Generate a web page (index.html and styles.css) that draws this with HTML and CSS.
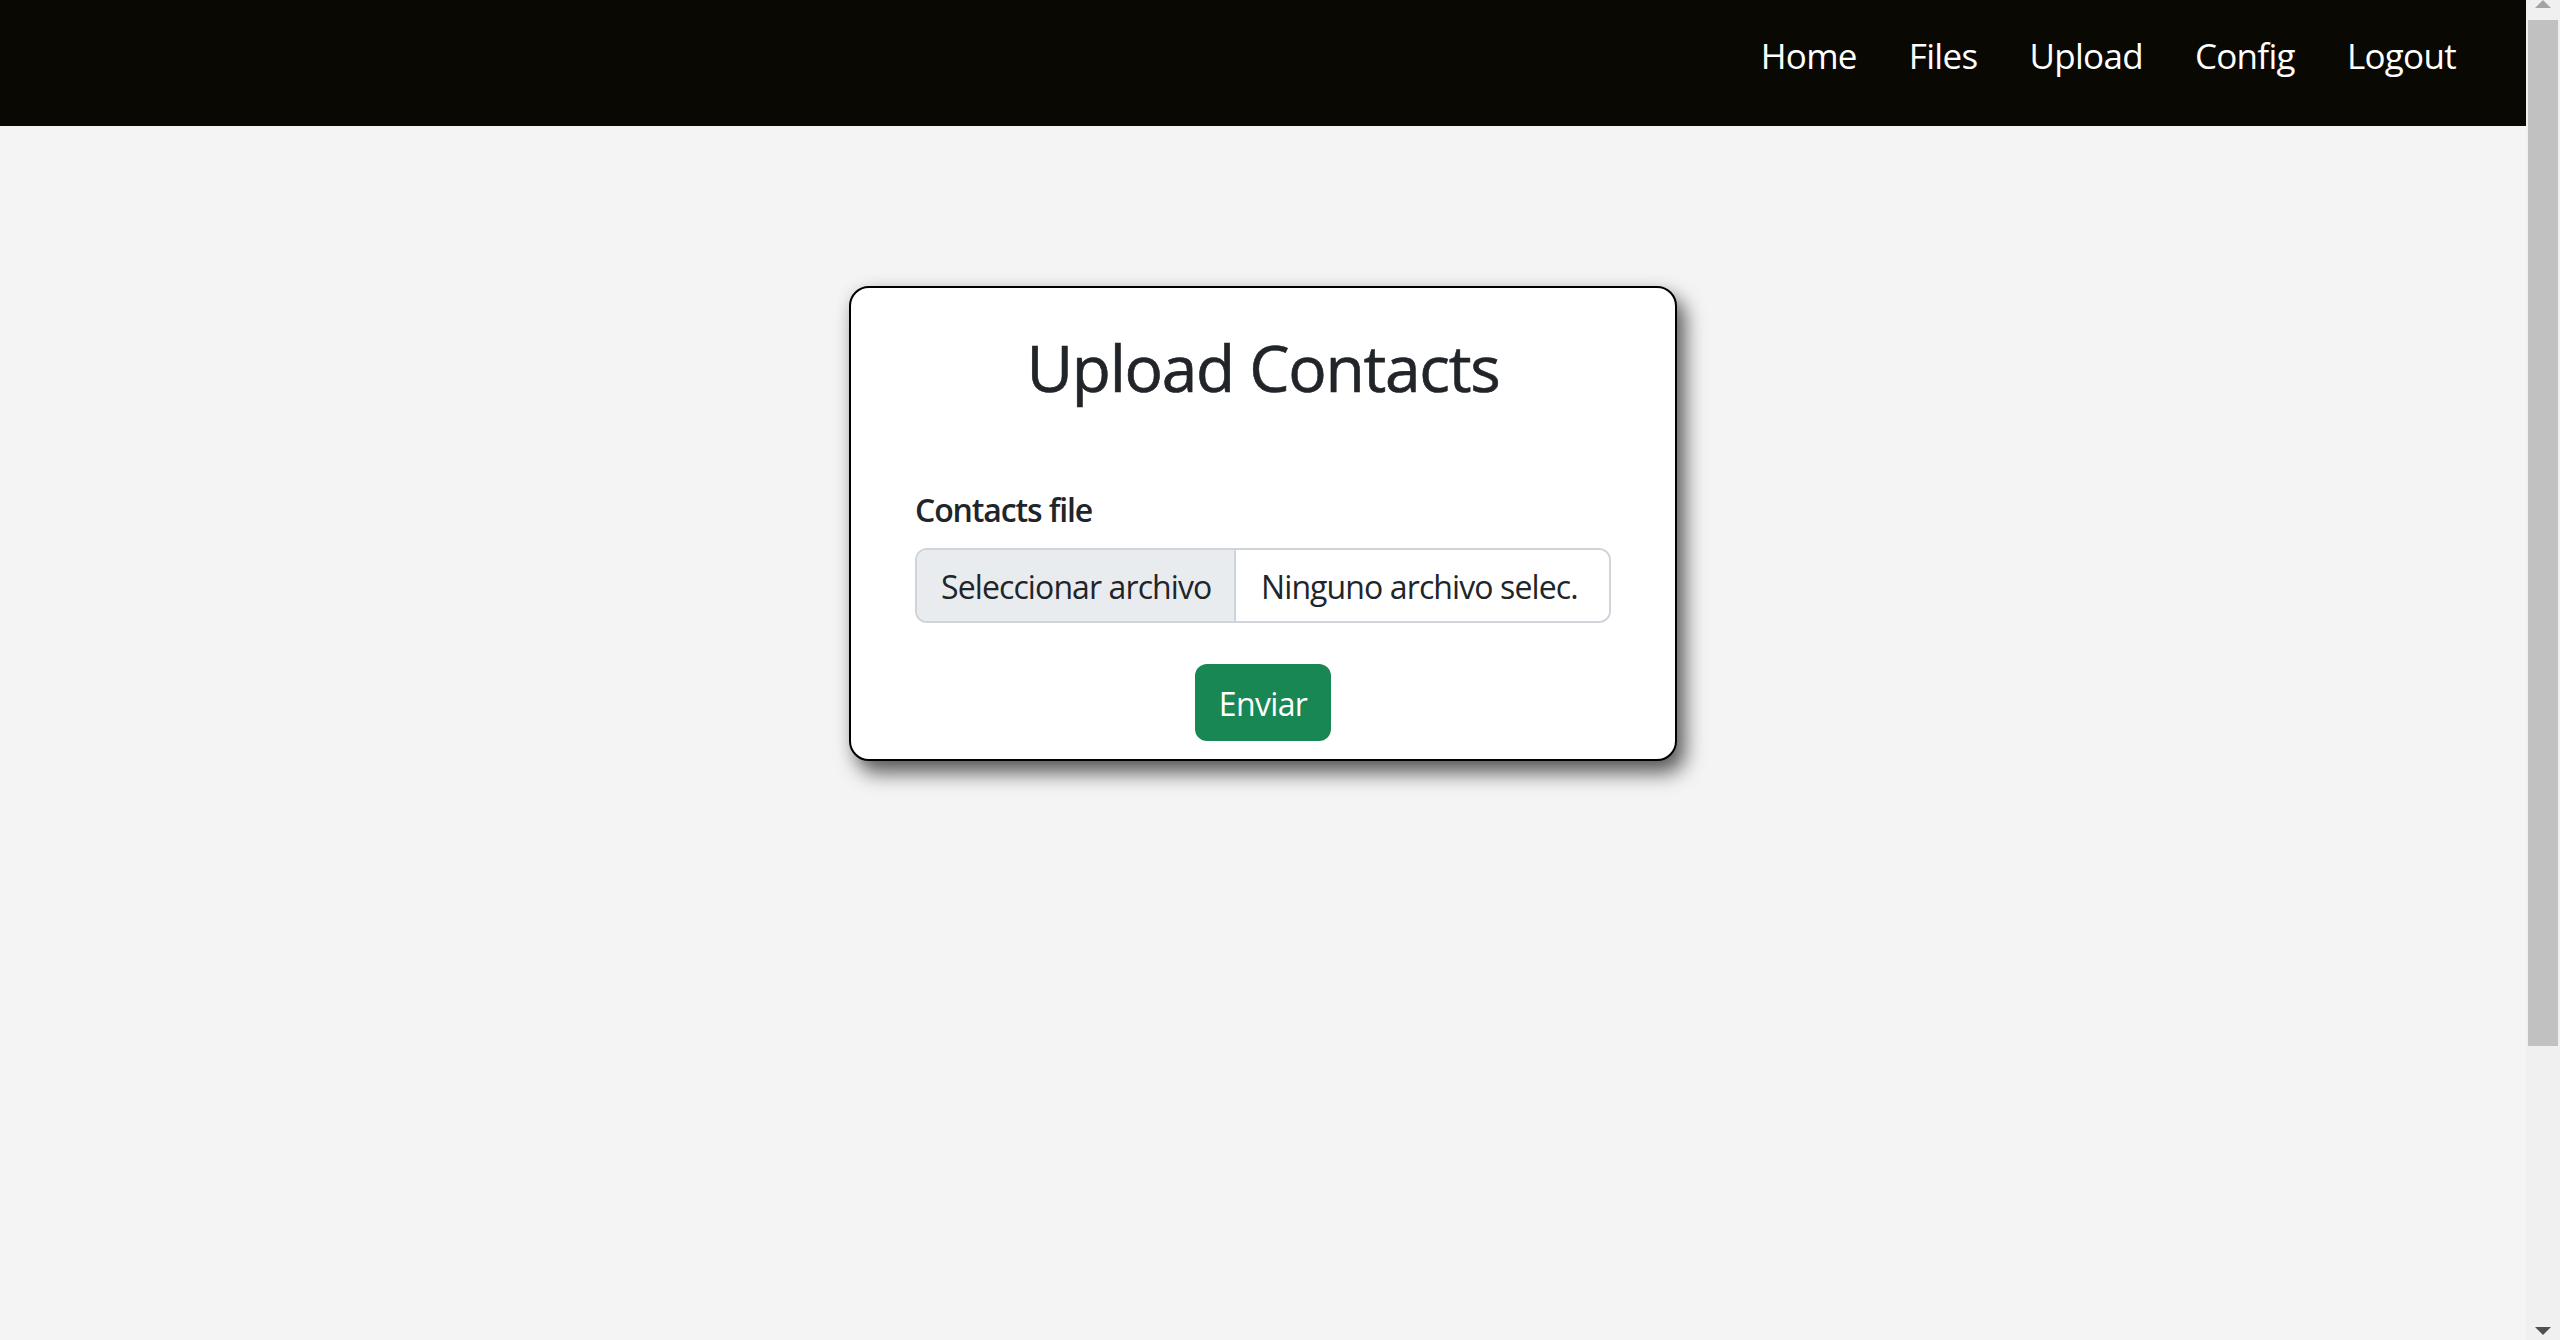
FILE: index.html
```html
<!DOCTYPE html>
<html lang="es">
<head>
<meta charset="utf-8">
<title>Upload Contacts</title>
<link rel="stylesheet" href="styles.css">
</head>
<body>
<div class="page">
  <nav class="topbar">
    <ul class="nav-links">
      <li><a href="#" class="nav-link">Home</a></li>
      <li><a href="#" class="nav-link">Files</a></li>
      <li><a href="#" class="nav-link">Upload</a></li>
      <li><a href="#" class="nav-link">Config</a></li>
      <li><a href="#" class="nav-link">Logout</a></li>
    </ul>
  </nav>
  <main class="content">
    <section class="card">
      <h2 class="card-title">Upload Contacts</h2>
      <form class="upload-form">
        <label class="form-label" for="contacts">Contacts file</label>
        <div class="file-input" id="contacts">
          <span class="file-btn">Seleccionar archivo</span>
          <span class="file-name">Ninguno archivo selec.</span>
        </div>
        <div class="actions">
          <button type="button" class="btn-submit">Enviar</button>
        </div>
      </form>
    </section>
  </main>
</div>
<div class="scrollbar" aria-hidden="true">
  <div class="sb-btn sb-up"><span class="arrow-up"></span></div>
  <div class="sb-thumb"></div>
  <div class="sb-track"></div>
  <div class="sb-btn sb-down"><span class="arrow-down"></span></div>
</div>
</body>
</html>
```
FILE: styles.css
```css
html, body {
  margin: 0;
  padding: 0;
}
body {
  display: flex;
  height: 100vh;
  overflow: hidden;
  background: #f4f4f4;
  color: #212529;
  font-family: "Open Sans", "Noto Sans", sans-serif;
}
.page {
  flex: 1;
  min-width: 0;
}
.scrollbar {
  width: 34px;
  flex: none;
  display: flex;
  flex-direction: column;
  background: #f0f0f0;
}
.sb-btn {
  height: 20px;
  flex: none;
  display: flex;
  justify-content: center;
}
.sb-up {
  align-items: flex-start;
}
.sb-down {
  align-items: flex-start;
  padding-top: 7px;
  box-sizing: border-box;
}
.arrow-up {
  width: 0;
  height: 0;
  border-left: 8px solid transparent;
  border-right: 8px solid transparent;
  border-bottom: 8px solid #a3a3a3;
}
.arrow-down {
  width: 0;
  height: 0;
  border-left: 8px solid transparent;
  border-right: 8px solid transparent;
  border-top: 8px solid #505050;
}
.sb-thumb {
  height: 1026px;
  flex: none;
  margin: 0 2px;
  background: #c1c1c1;
}
.sb-track {
  flex: 1;
}
.topbar {
  height: 126px;
  box-sizing: border-box;
  background: #0a0803;
  padding: 29px 70px 0 0;
}
.nav-links {
  list-style: none;
  margin: 0;
  padding: 0;
  display: flex;
  justify-content: flex-end;
  gap: 52px;
}
.nav-link {
  display: block;
  color: #ffffff;
  text-decoration: none;
  font-size: 35px;
  line-height: 54px;
  letter-spacing: -0.02em;
}
.content {
  padding-top: 160px;
}
.card {
  width: 828px;
  box-sizing: border-box;
  margin: 0 auto;
  background: #ffffff;
  border: 2px solid #000000;
  border-radius: 20px;
  padding: 42px 64px 18px;
  box-shadow: 8px 12px 20px rgba(0, 0, 0, 0.62), 0 0 16px rgba(0, 0, 0, 0.08);
}
.card-title {
  margin: 0 0 77px;
  text-align: center;
  font-size: 64px;
  line-height: 1.2;
  font-weight: 500;
  letter-spacing: -0.02em;
  -webkit-text-stroke: 0.6px #212529;
}
.upload-form {
  margin: 0;
}
.form-label {
  display: block;
  font-size: 32px;
  line-height: 48px;
  font-weight: 600;
  letter-spacing: -0.035em;
  padding-top: 2px;
  margin-bottom: 14px;
}
.file-input {
  display: flex;
  height: 75px;
  box-sizing: border-box;
  border: 2px solid #ced4da;
  border-radius: 12px;
  overflow: hidden;
  font-size: 32px;
  line-height: 48px;
  letter-spacing: -0.028em;
  white-space: nowrap;
}
.file-btn {
  flex: none;
  width: 319px;
  box-sizing: border-box;
  display: flex;
  align-items: center;
  padding: 3px 0 0 24px;
  background: #e9ecef;
  border-right: 2px solid #ced4da;
}
.file-name {
  flex: 1;
  display: flex;
  align-items: center;
  padding: 3px 0 0 25px;
  background: #ffffff;
}
.actions {
  display: flex;
  justify-content: center;
  margin-top: 41px;
}
.btn-submit {
  width: 136px;
  font-family: inherit;
  font-size: 32px;
  line-height: 48px;
  letter-spacing: -0.02em;
  padding: 16px 0 13px;
  border: none;
  border-radius: 12px;
  background: #198754;
  color: #ffffff;
}
```
